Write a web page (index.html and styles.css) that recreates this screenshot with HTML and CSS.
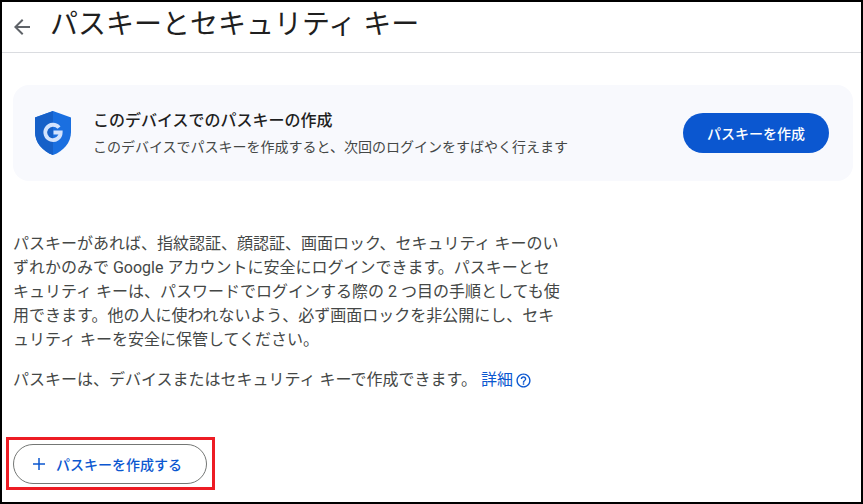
FILE: index.html
```html
<!DOCTYPE html>
<html lang="ja">
<head>
<meta charset="utf-8">
<title>パスキーとセキュリティ キー</title>
<link rel="stylesheet" href="styles.css">
</head>
<body>
<div class="frame">
  <header class="header">
    <svg class="back" viewBox="0 0 24 24" width="24" height="24" aria-hidden="true"><path d="M20 11H7.83l5.59-5.59L12 4l-8 8 8 8 1.41-1.41L7.83 13H20z"/></svg>
    <h1 class="title">パスキーとセキュリティ キー</h1>
  </header>
  <main class="content">
    <section class="card">
      <svg class="shield" viewBox="0 0 36 44" width="36" height="44" aria-hidden="true">
        <path fill="#1a6fe0" d="M18 0 36 6.500V21c0 10.500-7.500 19.300-18 23C7.500 40.300 0 31.500 0 21V6.500z"/>
        <path fill="#1660c8" d="M18 0 0 6.500V21c0 10.500 7.500 19.300 18 23z"/>
        <path fill="none" stroke="#d3e3fd" stroke-width="3.800" d="M24 16.600A7.700 7.700 0 1 0 25.700 21.500H18.500"/>
      </svg>
      <div class="card-text">
        <div class="card-title">このデバイスでのパスキーの作成</div>
        <div class="card-sub">このデバイスでパスキーを作成すると、次回のログインをすばやく行えます</div>
      </div>
      <button class="primary">パスキーを作成</button>
    </section>
    <p class="body-text">パスキーがあれば、指紋認証、顔認証、画面ロック、セキュリティ キーのいずれかのみで Google アカウントに安全にログインできます。パスキーとセキュリティ キーは、パスワードでログインする際の 2 つ目の手順としても使用できます。他の人に使われないよう、必ず画面ロックを非公開にし、セキュリティ キーを安全に保管してください。</p>
    <p class="body-text second">パスキーは、デバイスまたはセキュリティ キーで作成できます。 <a class="link" href="#">詳細<svg class="help" viewBox="0 0 24 24" width="17" height="17" aria-hidden="true"><path d="M11 18h2v-2h-2v2zm1-16C6.480 2 2 6.480 2 12s4.480 10 10 10 10-4.480 10-10S17.520 2 12 2zm0 18c-4.410 0-8-3.590-8-8s3.590-8 8-8 8 3.590 8 8-3.590 8-8 8zm0-14c-2.210 0-4 1.790-4 4h2c0-1.100.9-2 2-2s2 .9 2 2c0 2-3 1.750-3 5h2c0-2.250 3-2.500 3-5 0-2.210-1.790-4-4-4z"/></svg></a></p>
    <div class="create-row">
      <button class="outline"><svg class="plus" viewBox="0 0 12 12" width="12" height="12" aria-hidden="true"><path d="M5.250 0h1.500v5.250H12v1.500H6.750V12h-1.500V6.750H0v-1.500h5.250z"/></svg>パスキーを作成する</button>
      <div class="highlight"></div>
    </div>
  </main>
</div>
</body>
</html>
```
FILE: styles.css
```css
* { box-sizing: border-box; }
html, body { margin: 0; padding: 0; }
body {
  width: 863px;
  height: 504px;
  overflow: hidden;
  background: #fff;
  font-family: Roboto, "Noto Sans CJK JP", "Noto Sans", sans-serif;
  color: #1f1f1f;
}
.frame {
  width: 863px;
  height: 504px;
  border: 2px solid #000;
  display: flex;
  flex-direction: column;
}
.header {
  height: 51px;
  flex: none;
  display: flex;
  align-items: center;
  padding-left: 8px;
  border-bottom: 1px solid #dadce0;
}
.back { fill: #5f6368; flex: none; }
.title {
  margin: 0 0 4px 16px;
  font-size: 28px;
  font-weight: 400;
  line-height: 36px;
  color: #1f1f1f;
}
.content {
  flex: 1;
  padding: 32px 8px 0 11px;
}
.card {
  height: 96px;
  border-radius: 16px;
  background: #f8f9fd;
  display: flex;
  align-items: center;
  padding: 0 24px 0 22px;
}
.shield { flex: none; }
.card-text { flex: 1; margin-left: 22px; padding-top: 1px; }
.card-title { font-size: 16px; font-weight: 500; line-height: 24px; color: #1f1f1f; }
.card-sub { font-size: 14px; line-height: 24px; margin-top: 2px; color: #444746; }
.primary {
  flex: none;
  width: 146px;
  height: 40px;
  border: 0;
  border-radius: 20px;
  background: #0b57d0;
  color: #fff;
  font: 500 14px Roboto, "Noto Sans CJK JP", sans-serif;
}
.body-text {
  margin: 51px 0 0;
  width: 548px;
  font-size: 16px;
  line-height: 24px;
  color: #444746;
}
.second { margin-top: 16px; width: auto; }
.link { color: #0b57d0; text-decoration: none; }
.help { fill: #0b57d0; vertical-align: -4px; margin-left: 2px; }
.create-row { position: relative; margin-top: 52px; width: 194px; }
.outline {
  display: flex;
  align-items: center;
  width: 194px;
  height: 40px;
  padding: 0 0 0 19px;
  border: 1px solid #747775;
  border-radius: 20px;
  background: #fff;
  color: #0b57d0;
  font: 500 14px Roboto, "Noto Sans CJK JP", sans-serif;
}
.plus { fill: #0b57d0; margin-right: 11px; }
.highlight {
  position: absolute;
  left: -7px;
  top: -7px;
  width: 209px;
  height: 53px;
  border: 3px solid #ed1c24;
  pointer-events: none;
}
```
